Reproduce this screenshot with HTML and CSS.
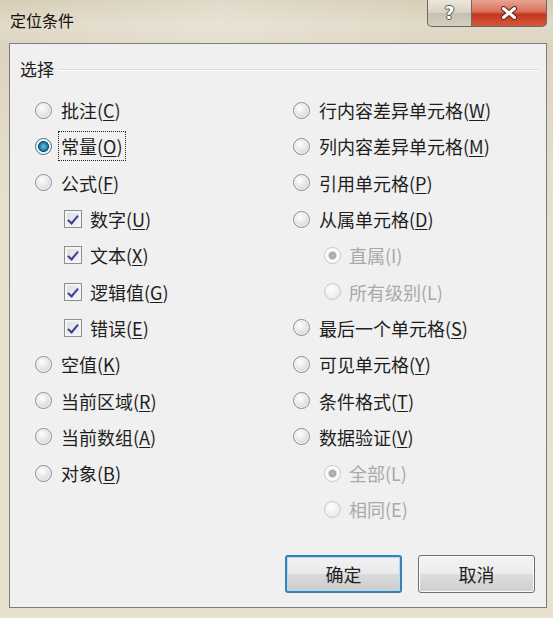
FILE: index.html
```html
<!DOCTYPE html>
<html lang="zh-CN">
<head>
    <meta charset="UTF-8">
    <title>定位条件</title>
    <link rel="stylesheet" href="styles.css">
</head>
<body>
    <div class="window">
        <div class="titlebar">
            <div class="title">定位条件</div>
            <div class="caption-buttons">
                <div class="cap-btn help">?</div>
                <div class="cap-btn close">
                    <svg width="18" height="14" viewBox="0 0 18 14">
                        <path d="M3.5 2.5 L14.5 11.5 M14.5 2.5 L3.5 11.5" stroke="#5e2a22" stroke-width="5" stroke-linecap="round"/>
                        <path d="M3.5 2.5 L14.5 11.5 M14.5 2.5 L3.5 11.5" stroke="#fff" stroke-width="3" stroke-linecap="round"/>
                    </svg>
                </div>
            </div>
        </div>

        <div class="client">
            <div class="group-title">
                <span>选择</span>
                <div class="group-line"></div>
            </div>

            <div class="columns">
                <div class="column">
                    <div class="row"><span class="radio"></span><span class="label">批注(<u>C</u>)</span></div>
                    <div class="row"><span class="radio checked"></span><span class="label focus">常量(<u>O</u>)</span></div>
                    <div class="row"><span class="radio"></span><span class="label">公式(<u>F</u>)</span></div>
                    <div class="row sub"><span class="check"></span><span class="label">数字(<u>U</u>)</span></div>
                    <div class="row sub"><span class="check"></span><span class="label">文本(<u>X</u>)</span></div>
                    <div class="row sub"><span class="check"></span><span class="label">逻辑值(<u>G</u>)</span></div>
                    <div class="row sub"><span class="check"></span><span class="label">错误(<u>E</u>)</span></div>
                    <div class="row"><span class="radio"></span><span class="label">空值(<u>K</u>)</span></div>
                    <div class="row"><span class="radio"></span><span class="label">当前区域(<u>R</u>)</span></div>
                    <div class="row"><span class="radio"></span><span class="label">当前数组(<u>A</u>)</span></div>
                    <div class="row"><span class="radio"></span><span class="label">对象(<u>B</u>)</span></div>
                </div>
                <div class="column">
                    <div class="row"><span class="radio"></span><span class="label">行内容差异单元格(<u>W</u>)</span></div>
                    <div class="row"><span class="radio"></span><span class="label">列内容差异单元格(<u>M</u>)</span></div>
                    <div class="row"><span class="radio"></span><span class="label">引用单元格(<u>P</u>)</span></div>
                    <div class="row"><span class="radio"></span><span class="label">从属单元格(<u>D</u>)</span></div>
                    <div class="row sub disabled"><span class="radio checked"></span><span class="label">直属(I)</span></div>
                    <div class="row sub disabled"><span class="radio"></span><span class="label">所有级别(L)</span></div>
                    <div class="row"><span class="radio"></span><span class="label">最后一个单元格(<u>S</u>)</span></div>
                    <div class="row"><span class="radio"></span><span class="label">可见单元格(<u>Y</u>)</span></div>
                    <div class="row"><span class="radio"></span><span class="label">条件格式(<u>T</u>)</span></div>
                    <div class="row"><span class="radio"></span><span class="label">数据验证(<u>V</u>)</span></div>
                    <div class="row sub disabled"><span class="radio checked"></span><span class="label">全部(L)</span></div>
                    <div class="row sub disabled"><span class="radio"></span><span class="label">相同(E)</span></div>
                </div>
            </div>

            <div class="buttons">
                <div class="btn default">确定</div>
                <div class="btn">取消</div>
            </div>
        </div>
    </div>
</body>
</html>
```

FILE: styles.css
```css
body {
    margin: 0;
    font-family: "Noto Sans CJK SC", "Noto Sans", sans-serif;
    background: #e2dac6;
}
.window {
    width: 553px;
    height: 618px;
    box-sizing: border-box;
    display: flex;
    flex-direction: column;
    background: linear-gradient(180deg, #d9d0bb 0%, #e6dfcd 30%, #e8e1d0 100%);
}
.titlebar {
    height: 43px;
    flex-shrink: 0;
    display: flex;
    align-items: flex-start;
    padding-left: 10px;
    background:
        linear-gradient(90deg, rgba(255,255,255,0) 0%, rgba(255,255,255,0.25) 40%, rgba(255,255,255,0) 80%),
        linear-gradient(180deg, #d6cdb6 0%, #e2dac8 60%, #ddd5c2 100%);
}
.title {
    font-size: 16px;
    color: #111;
    margin-top: 8px;
    line-height: 24px;
}
.caption-buttons {
    margin-left: auto;
    margin-right: 6px;
    display: flex;
    height: 27px;
}
.cap-btn {
    height: 26px;
    display: flex;
    align-items: center;
    justify-content: center;
    border: 1px solid #6d675d;
    border-top: none;
}
.help {
    width: 43px;
    border-right: none;
    border-radius: 0 0 0 5px;
    background: linear-gradient(180deg, #ece7dc 0%, #d8d1c2 50%, #c6bfae 51%, #d5cfc2 100%);
    color: #fff;
    font-family: "DejaVu Sans", sans-serif;
    font-weight: bold;
    font-size: 17px;
    text-shadow: 1px 0 0 #555, -1px 0 0 #555, 0 1px 0 #555, 0 -1px 0 #555;
}
.close {
    width: 74px;
    border-radius: 0 0 5px 0;
    background: linear-gradient(180deg, #e9a491 0%, #d9705c 45%, #c3361f 55%, #d45a3e 100%);
}
.client {
    flex: 1;
    margin: 0 6px 10px 9px;
    border: 1px solid #7c7c7c;
    background: #f0f0f0;
    display: flex;
    flex-direction: column;
    color: #1e1e1e;
}
.group-title {
    display: flex;
    align-items: center;
    padding: 13px 8px 0 10px;
    font-size: 17px;
    line-height: 24px;
}
.group-line {
    flex: 1;
    height: 1px;
    margin-left: 6px;
    margin-top: 1px;
    background: #d9d9d9;
    box-shadow: 0 1px 0 #fff;
}
.columns {
    display: grid;
    grid-template-columns: 258px 1fr;
    padding: 11px 0 0 25px;
}
.row {
    height: 36.3px;
    display: flex;
    align-items: center;
    font-size: 18px;
}
.row.sub {
    padding-left: 29px;
}
.column + .column .row.sub {
    padding-left: 31px;
}
.label {
    margin-left: 9px;
    line-height: 24px;
}
.label u {
    text-underline-offset: 2px;
}
.focus {
    outline: 1px dotted #222;
    outline-offset: 2px;
}
.radio {
    width: 17px;
    height: 17px;
    border-radius: 50%;
    box-sizing: border-box;
    border: 1px solid #8c8e90;
    background: radial-gradient(circle at 40% 35%, #ffffff 0%, #e8e8e8 45%, #c8c9cb 100%);
    box-shadow: inset 0 0 0 1px #f4f4f4;
    flex-shrink: 0;
}
.radio.checked {
    border-color: #3c6f8d;
    background: radial-gradient(circle at 50% 50%, #6cc4e6 0%, #1e7fae 35%, #0d4f73 48%, #e6eef2 55%, #ffffff 70%, #c8ccd0 100%);
}
.check {
    width: 18px;
    height: 18px;
    box-sizing: border-box;
    border: 1px solid #8e8f8f;
    background: linear-gradient(135deg, #dcdcdc 0%, #f6f6f6 100%);
    box-shadow: inset 0 0 0 2px #f4f4f4;
    position: relative;
    flex-shrink: 0;
}
.check::after {
    content: "";
    position: absolute;
    left: 5px;
    top: 2px;
    width: 4px;
    height: 9px;
    border: solid #3a3f9a;
    border-width: 0 2.5px 2.5px 0;
    transform: rotate(40deg);
}
.row.sub .label {
    margin-left: 8px;
}
.disabled {
    color: #a9a9a9;
}
.disabled .radio {
    border-color: #c8c8c8;
    background: radial-gradient(circle at 40% 35%, #ffffff 0%, #eeeeee 60%, #dedede 100%);
    box-shadow: none;
}
.disabled .radio.checked {
    background: radial-gradient(circle, #b9b9b9 0%, #a8a8a8 30%, #f2f2f2 42%, #ffffff 60%, #dedede 100%);
}
.buttons {
    margin-top: auto;
    display: flex;
    justify-content: flex-end;
    gap: 16px;
    padding: 0 11px 14px 0;
}
.btn {
    width: 117px;
    height: 38px;
    box-sizing: border-box;
    border: 1px solid #707070;
    border-radius: 3px;
    display: flex;
    align-items: center;
    justify-content: center;
    font-size: 18px;
    color: #1e1e1e;
    background: linear-gradient(180deg, #f3f3f3 0%, #ebebeb 50%, #dddddd 51%, #cfcfcf 100%);
    box-shadow: inset 0 0 0 1px #fbfbfb;
}
.btn.default {
    border: 2px solid #3c7fb1;
    box-shadow: inset 0 0 0 1px #a9e0f6;
    background: linear-gradient(180deg, #f2f2f2 0%, #e9e9e9 50%, #dadada 51%, #cdcdcd 100%);
}
```
